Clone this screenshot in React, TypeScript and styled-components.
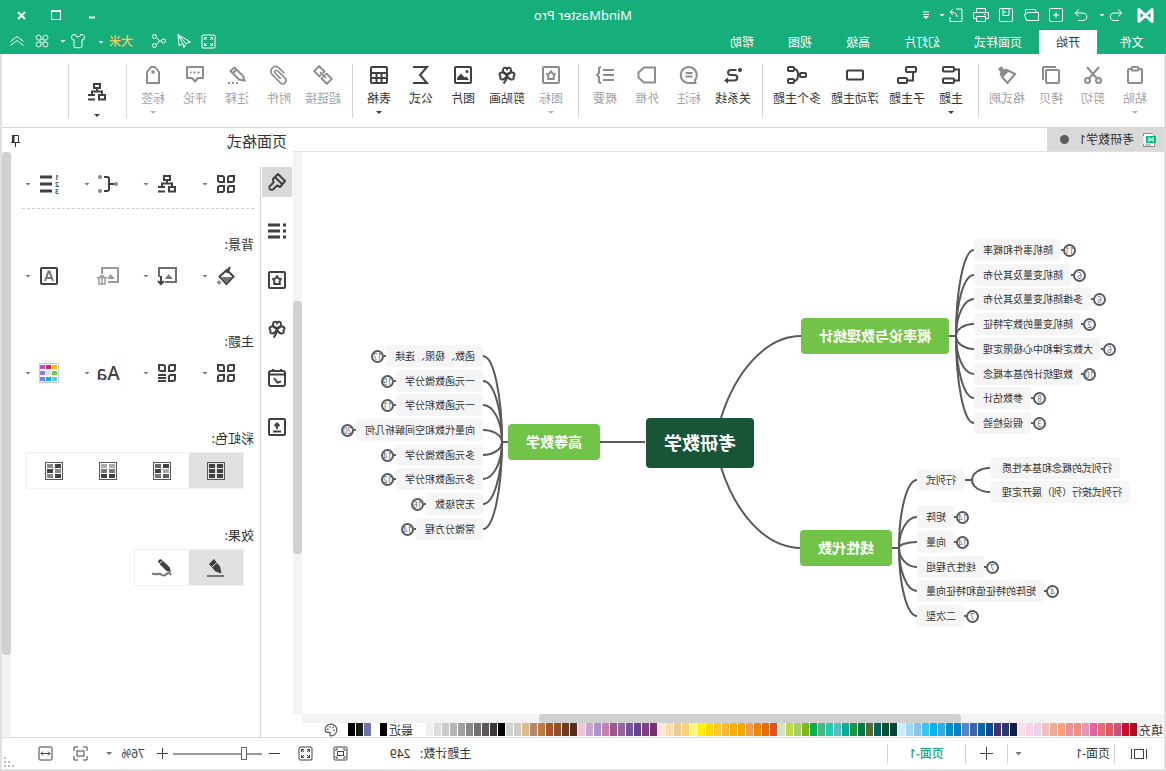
import React from "react";
import styled, { createGlobalStyle, css } from "styled-components";
import { Shirt, Palette } from "lucide-react";

const green = "#16ae7a";
const ink = "#404040";
const line = "#d4d4d4";

const GlobalStyle = createGlobalStyle`
  *, *::before, *::after { box-sizing: border-box; }
  body {
    margin: 0;
    background: #fff;
    color: #333;
    font: 12px/16px "Noto Sans", "Noto Sans CJK SC", sans-serif;
  }
  button, select, input { font: inherit; color: inherit; margin: 0; }
  button { border: 0; padding: 0; background: none; cursor: pointer; }
  svg { display: block; flex: none; overflow: visible; }
`;

/* The whole window is shown flipped left to right. */
const Window = styled.div`
  display: flex;
  flex-direction: column;
  min-height: 100vh;
  overflow: hidden;
  transform: scaleX(-1);
`;

/* ---------- shared pieces ---------- */

type IconProps = { w?: number; h?: number; sw?: number; children: React.ReactNode };

const Icon = ({ w = 18, h = w, sw = 2, children }: IconProps) => (
  <svg width={w} height={h} viewBox={`0 0 ${w} ${h}`} fill="none" stroke="currentColor" strokeWidth={sw} aria-hidden="true">
    {children}
  </svg>
);

const Caret = styled.span<{ $color?: string }>`
  flex: none;
  width: 6px;
  height: 3px;
  background: ${(p) => p.$color ?? "currentColor"};
  clip-path: polygon(0 0, 100% 0, 50% 100%);
`;

/* ---------- header ---------- */

const Header = styled.header`
  background: ${green};
  color: #fff;
`;

const TitleBar = styled.div`
  display: grid;
  grid-template-columns: 1fr auto 1fr;
  align-items: center;
  height: 30px;
  padding: 0 12px;
`;

const QuickBar = styled.div`
  display: flex;
  align-items: center;
  gap: 10px;
`;

const QuickButton = styled.button<{ $before?: number; $narrow?: boolean }>`
  display: flex;
  align-items: center;
  justify-content: center;
  gap: 4px;
  min-width: ${(p) => (p.$narrow ? 6 : 15)}px;
  height: 20px;
  margin-left: ${(p) => p.$before ?? 0}px;
`;

const AppTitle = styled.h1`
  margin: 0;
  font-size: 13px;
  font-weight: 400;
  line-height: 20px;
`;

const WindowButtons = styled.div`
  display: flex;
  justify-content: flex-end;
`;

const WindowButton = styled.button`
  display: flex;
  align-items: center;
  justify-content: center;
  width: 36px;
  height: 26px;
  &:last-child { width: 20px; margin-left: 6px; }
`;

const MenuBar = styled.nav`
  display: flex;
  height: 24px;
`;

const MenuTab = styled.button<{ $active?: boolean }>`
  padding: 2px 17px 0;
  &:first-child { width: 69px; }
  ${(p) => p.$active && css`background: #fff; color: #333;`}
`;

const MenuTools = styled.div`
  display: flex;
  align-items: center;
  gap: 10px;
  margin-left: auto;
  padding: 0 10px 2px 0;
`;

const UserButton = styled.button`
  display: flex;
  align-items: center;
  gap: 5px;
  margin-left: 8px;
  padding-top: 2px;
  color: #ffc65c;
  font-weight: 500;
`;

/* ---------- body and ribbon ---------- */

const Body = styled.div`
  flex: 1;
  display: flex;
  flex-direction: column;
  background: #fff;
  border: 2px solid #e0e0e0;
  border-top: 0;
`;

const Ribbon = styled.div`
  display: flex;
  height: 74px;
  padding: 10px 0 9px 2px;
  border-bottom: 1px solid ${line};
`;

const RibbonGroup = styled.div`
  display: flex;
  flex: none;
  padding: 0 5px 0 6px;
  border-right: 1px solid ${line};
`;

const RibbonButton = styled.button<{ $chars: number; $off?: boolean; $low?: boolean }>`
  display: flex;
  flex-direction: column;
  align-items: center;
  width: ${(p) => (p.$chars < 3 ? 42 : p.$chars * 12 + 10)}px;
  padding-top: ${(p) => (p.$low ? 19 : 2)}px;
  color: ${(p) => (p.$off ? "#8c8c8c" : ink)};
  white-space: nowrap;
`;

const RibbonLabel = styled.span<{ $off?: boolean }>`
  margin: 7px 0 4px;
  color: ${(p) => (p.$off ? "#a2a2a2" : "#333")};
`;

const RibbonSpacer = styled.span`
  height: 13px;
`;

type Tool = { label: string; icon: React.ReactNode; off?: boolean; menu?: boolean };

const clover = (
  <>
    <path d="M9 9C5 7 4.500 5 5 3.500C5.500 1.500 8 1 9 3C10 1 12.500 1.500 13 3.500C13.500 5 13 7 9 9Z" />
    <path d="M9 9C7 5.500 4.500 6.500 3.500 6.500C1.500 7 .500 9 2.500 10.500C1.500 12.500 3 14 5 13.500C7 13 8.500 11.500 9 9Z" />
    <path d="M9 9C11 5.500 13.500 6.500 14.500 6.500C16.500 7 17.500 9 15.500 10.500C16.500 12.500 15 14 13 13.500C11 13 9.500 11.500 9 9Z" />
    <path d="M9 9C9 13 10.500 15.500 12.500 17.500" />
  </>
);

const starBox = (
  <>
    <rect x="1" y="1" width="16" height="16" rx="1" />
    <path d="M9 5L10.500 7.500L13 8L11.500 10.500L12 13H6L6.500 10.500L5 8L7.500 7.500Z" strokeWidth="1.800" strokeLinejoin="round" />
  </>
);

const layoutIcon = (
  <Icon>
    <rect x="6" y="1" width="6" height="4" />
    <path d="M9 5V8M4 11V8.500H14V11" />
    <rect x="1" y="12" width="6" height="4.500" />
    <path d="M11 12H18M11 16.500H18" />
  </Icon>
);

const groups: Tool[][] = [
  [
    { label: "粘贴", off: true, menu: true, icon: <Icon><rect x="2" y="3" width="14" height="14" rx="1" /><rect x="5.500" y="1" width="7" height="3.500" rx="1.500" fill="#fff" /></Icon> },
    { label: "剪切", off: true, icon: <Icon><path d="M3 1L13 12.500M15 1L5 12.500" /><circle cx="3.500" cy="14.500" r="2.500" /><circle cx="14.500" cy="14.500" r="2.500" /></Icon> },
    { label: "拷贝", off: true, icon: <Icon><rect x="1" y="4" width="13" height="13" rx="1" /><path d="M4 1H16.500Q17 1 17 1.500V14" /></Icon> },
    { label: "格式刷", off: true, icon: <Icon><path d="M1 8L8 4.500L14 11L8.500 17Z" /><path d="M7 5L9.500 2.500L12 3.500L14.500 0L18 3L15.500 6L16.500 8.500L14 11.500Z" fill="currentColor" stroke="none" /></Icon> },
  ],
  [
    { label: "主题", menu: true, icon: <Icon><rect x="6" y="1" width="11" height="4.500" rx="1" /><rect x="6" y="12.500" width="11" height="4.500" rx="1" /><path d="M6 3.500H1V14.500H6" /></Icon> },
    { label: "子主题", icon: <Icon w={20} h={18}><rect x="1" y="1" width="10" height="5" rx="1" /><rect x="10" y="12" width="9" height="5" rx="1" /><path d="M4 6V14.500H10" /></Icon> },
    { label: "浮动主题", icon: <Icon><rect x="1" y="4.500" width="16" height="9" rx="1" /></Icon> },
    { label: "多个主题", icon: <Icon w={20} h={18}><rect x="1" y="7" width="6" height="4" rx="1" /><rect x="13" y="1" width="6" height="4" rx="1" /><rect x="13" y="13" width="6" height="4" rx="1" /><path d="M7 9H9M13 3C10 3 9 5 9 9C9 13 10 15 13 15" /></Icon> },
  ],
  [
    { label: "关系线", icon: <Icon><circle cx="2" cy="4" r="2" fill="currentColor" stroke="none" /><path d="M5.500 4H11C15 4 15 9 11 9H8C3.500 9 3.500 14.500 8 14.500H15" /><path d="M14 11.500L18 14.500L14 17.500Z" fill="currentColor" stroke="none" /></Icon> },
    { label: "标注", off: true, icon: <Icon><path d="M2.500 17H9A8 8 0 1 0 3 14Z" /><path d="M5.500 7H12.500M5.500 10.500H12.500" /></Icon> },
    { label: "外框", off: true, icon: <Icon><path d="M1 1.500H12L17.500 6.500V11.500L12 16.500H1Z" strokeLinejoin="round" /></Icon> },
    { label: "概要", off: true, icon: <Icon><path d="M0 4H11M0 9H11M0 14H11" /><path d="M13 1Q15 1 15 3V7L17 9L15 11V15Q15 17 13 17" /></Icon> },
  ],
  [
    { label: "图标", off: true, menu: true, icon: <Icon>{starBox}</Icon> },
    { label: "剪贴画", icon: <Icon>{clover}</Icon> },
    { label: "图片", icon: <Icon><rect x="1" y="1" width="16" height="16" rx="1" /><path d="M3 14L5.500 10.500L7.500 11.500L11 7.500L15 12V14Z" fill="currentColor" stroke="none" /><circle cx="5" cy="5.500" r="1.500" fill="currentColor" stroke="none" /></Icon> },
    { label: "公式", icon: <Icon><path d="M17 1H3L10 9L3 17H17" /></Icon> },
    { label: "表格", menu: true, icon: <Icon><rect x="1" y="1" width="16" height="16" rx="1" /><path d="M1 7H17M1 12H17M6.500 7V17M11.500 7V17" /></Icon> },
  ],
  [
    { label: "超链接", off: true, icon: <Icon><g transform="rotate(-45 9 9)"><path d="M7.500 10.500V12.500H0V5.500H7.500V7.500M10.500 7.500V5.500H18V12.500H10.500V10.500" strokeLinejoin="round" /><path d="M5 9H13" /></g></Icon> },
    { label: "附件", off: true, icon: <Icon><path d="M5 10.500H13A1.600 1.600 0 0 0 13 7H2.500A3 3 0 0 0 2.500 13.500H14.500A4.800 4.800 0 0 0 14.500 4H6.500" transform="rotate(-45 9 9)" strokeWidth="1.700" /></Icon> },
    { label: "注释", off: true, icon: <Icon><path d="M1.500 14.500L3 10L11.500 1.500L15.500 5L7 13.500Z" /><path d="M9.500 3.500L13.500 7.500" /><path d="M8 17H18" strokeDasharray="2 2" /></Icon> },
    { label: "评论", off: true, icon: <Icon><path d="M1 1H17V12H12L9 15.500L6 12H1Z" strokeLinejoin="round" /><path d="M4.500 6.500H14" strokeDasharray="2 2" /></Icon> },
    { label: "标签", off: true, menu: true, icon: <Icon><path d="M3 17V6L7 1H11L15 6V17Z" strokeLinejoin="round" /><circle cx="9" cy="6" r="1.800" fill="currentColor" stroke="none" /></Icon> },
  ],
];

/* ---------- editor ---------- */

const Workspace = styled.main`
  flex: 1;
  display: flex;
  min-height: 0;
`;

const Editor = styled.section`
  flex: 1;
  min-width: 0;
  display: flex;
  flex-direction: column;
`;

const DocTabs = styled.div`
  display: flex;
  height: 24px;
  border-bottom: 1px solid #e0e0e0;
`;

const DocTab = styled.button`
  display: flex;
  align-items: center;
  gap: 8px;
  width: 117px;
  padding-left: 8px;
  background: #d9d9d9;
`;

const Dot = styled.span`
  width: 9px;
  height: 9px;
  margin-left: 2px;
  border-radius: 50%;
  background: #5c5c5c;
`;

const CanvasRow = styled.div`
  flex: 1;
  display: flex;
  min-height: 0;
`;

const Canvas = styled.div`
  position: relative;
  flex: 1;
  min-width: 0;
  overflow: hidden;
`;

const Track = styled.div<{ $axis: "x" | "y"; $from: number; $size: number }>`
  display: flex;
  flex: none;
  flex-direction: ${(p) => (p.$axis === "x" ? "row" : "column")};
  background: #f3f3f3;
  ${(p) => (p.$axis === "x" ? css`height: 9px; margin-right: 9px;` : css`width: 9px;`)}
  &::before {
    content: "";
    flex: 0 0 ${(p) => p.$from}%;
  }
  &::after {
    content: "";
    flex: 0 0 ${(p) => p.$size}%;
    border-radius: 4px;
    background: #d0d0d0;
  }
`;

const Links = styled.svg`
  position: absolute;
  inset: 0;
`;

const TopicNode = styled.div<{ $x: number; $y: number; $root?: boolean }>`
  position: absolute;
  left: ${(p) => p.$x}px;
  top: ${(p) => p.$y}px;
  display: flex;
  align-items: center;
  height: ${(p) => (p.$root ? 50 : 36)}px;
  padding: 0 18px;
  border-radius: 4px;
  background: ${(p) => (p.$root ? "#175536" : "#71c447")};
  color: #fff;
  font-size: ${(p) => (p.$root ? 18 : 14)}px;
  font-weight: 700;
  white-space: nowrap;
`;

const LeafRow = styled.div<{ $x: number; $y: number; $side: "left" | "right" }>`
  position: absolute;
  top: ${(p) => p.$y - 11}px;
  display: flex;
  align-items: center;
  ${(p) =>
    p.$side === "left"
      ? css`left: 0; width: ${p.$x}px; flex-direction: row-reverse;`
      : css`left: ${p.$x}px;`}
`;

const Leaf = styled.span<{ $wide?: boolean }>`
  height: 22px;
  padding: 0 ${(p) => (p.$wide ? 12 : 9)}px 0 8px;
  border-radius: 4px;
  background: #f5f5f5;
  font-size: 10px;
  line-height: 22px;
  white-space: nowrap;
`;

const Stem = styled.span`
  width: 2px;
  height: 2px;
  background: #595959;
`;

const Badge = styled.span`
  width: 13px;
  height: 13px;
  border: 2px solid #595959;
  border-radius: 50%;
  color: #5c6684;
  display: flex;
  align-items: center;
  justify-content: center;
  font-size: 8px;
  line-height: 9px;
`;

type LeafData = [text: string, y: number, count?: number];

type Branch = {
  x: number;
  joint: [number, number];
  stem: number;
  side: "left" | "right";
  wide?: boolean;
  leaves: LeafData[];
};

const branches: Branch[] = [
  {
    x: 190, joint: [208, 184], stem: 215, side: "left",
    leaves: [
      ["随机事件和概率", 98, 11], ["随机变量及其分布", 123, 6], ["多维随机变量及其分布", 147, 6],
      ["随机变量的数字特征", 172, 2], ["大数定律和中心极限定理", 197, 6], ["数理统计的基本概念", 222, 10],
      ["参数估计", 246, 8], ["假设检验", 271, 3],
    ],
  },
  {
    x: 247, joint: [265, 396], stem: 272, side: "left",
    leaves: [
      ["行列式", 328], ["矩阵", 365, 14], ["向量", 390, 14],
      ["线性方程组", 415, 7], ["矩阵的特征值和特征向量", 439, 4], ["二次型", 464, 7],
    ],
  },
  {
    x: 174, joint: [192, 328], stem: 199, side: "left", wide: true,
    leaves: [["行列式的概念和基本性质", 316], ["行列式按行（列）展开定理", 340]],
  },
  {
    x: 681, joint: [662, 290], stem: 656, side: "right",
    leaves: [
      ["函数、极限、连续", 204, 17], ["一元函数微分学", 229, 19], ["一元函数积分学", 253, 11],
      ["向量代数和空间解析几何", 278, 20], ["多元函数微分学", 303, 14], ["多元函数积分学", 327, 12],
      ["无穷级数", 352, 16], ["常微分方程", 377, 14],
    ],
  },
];

/* Quarter-ellipse from a branch joint to the edge of a leaf. */
const curve = ([jx, jy]: [number, number], ex: number, ey: number) =>
  `M${jx} ${jy}C${jx} ${jy + (ey - jy) * 0.55} ${ex + (jx - ex) * 0.55} ${ey} ${ex} ${ey}`;

const MindMap = () => (
  <Canvas>
    <Links width="862" height="562" fill="none" stroke="#595959" strokeWidth="2" aria-hidden="true">
      <path d="M443 266C429 221 399 184 363 184M443 315C429 360 399 396 363 396M519 290H564" />
      {branches.map((b) => (
        <g key={b.x}>
          <path d={`M${b.stem} ${b.joint[1]}H${b.joint[0]}`} />
          {b.leaves.map(([t, y]) => <path key={t} d={curve(b.joint, b.x, y)} />)}
        </g>
      ))}
    </Links>
    <TopicNode $root $x={410} $y={266}>考研数学</TopicNode>
    <TopicNode $x={215} $y={166}>概率论与数理统计</TopicNode>
    <TopicNode $x={272} $y={378}>线性代数</TopicNode>
    <TopicNode $x={564} $y={272}>高等数学</TopicNode>
    {branches.flatMap((b) =>
      b.leaves.map(([text, y, count]) => (
        <LeafRow key={text} $x={b.x} $y={y} $side={b.side}>
          <Leaf $wide={b.wide}>{text}</Leaf>
          {count !== undefined && <><Stem /><Badge>{count}</Badge></>}
        </LeafRow>
      )),
    )}
  </Canvas>
);

const PaletteRow = styled.div`
  display: flex;
  align-items: flex-start;
  gap: 1px;
  height: 14px;
`;

const PaletteLabel = styled.span<{ $before?: number; $after: number }>`
  flex: none;
  margin-left: ${(p) => p.$before ?? 0}px;
  margin-right: ${(p) => p.$after}px;
  line-height: 16px;
`;

const Swatch = styled.button<{ $color: string }>`
  flex: none;
  width: 7px;
  height: 13px;
  background: ${(p) => p.$color};
`;

const PaletteButton = styled.button`
  margin-left: 9px;
  color: #555;
`;

const palette =
  "b80a18 d9082a c9517b ea5464 ef6a70 e95fa0 e197b5 f08e80 ee8f9a ffa07a f0a993 f6bfbd e9d3e7 fcd3e6 fde0e6 0c1f50 253a70 432e78 084a95 0067ab 3f62b0 5686c8 0080cf 0090d2 2fabe5 00b4f2 33c6fa 8bc2ea 9ed8f0 cfe9f6 024638 00552e 00645e 556b2f 007a48 1f9640 00b09f 55bec0 1fccb0 48b980 00b14f 7fba14 a4d168 c0da3f cce5cb e85020 f06a00 f28500 f59a55 f3a800 ffb000 feb735 fbc830 fed800 fff000 fdf385 ffd170 ebcb98 fddcab fce8d2 7a2f78 813c82 6a4097 74559b 97659f a0588c cb7cb0 aa93d0 c9a6cc edc4dc 5a2c1a 743a20 95502a a85528 bf7a40 b5866b dfb983 d3c9c6 ccd5cc 000000 3e3738 595757 727171 898989 9fa0a0 b5b5b6 c9caca dcdddd eeefef".split(" ");

const recent = ["6c74b5", "1a1a1a", "000000"];

/* ---------- format panel ---------- */

const Panel = styled.aside`
  flex: none;
  display: flex;
  flex-direction: column;
  width: 291px;
`;

const PanelHead = styled.div`
  display: flex;
  align-items: center;
  justify-content: space-between;
  height: 24px;
  padding: 1px 9px 0 6px;
`;

const PanelTitle = styled.h2`
  margin: 0;
  font-size: 15px;
  font-weight: 400;
  line-height: 22px;
`;

const PanelMain = styled.div`
  flex: 1;
  display: flex;
`;

const Strip = styled.div`
  flex: none;
  display: flex;
  flex-direction: column;
  gap: 19px;
  width: 33px;
  margin-top: 15px;
  padding-left: 1px;
  border-right: 1px solid ${line};
`;

const StripButton = styled.button<{ $active?: boolean }>`
  display: flex;
  align-items: center;
  justify-content: center;
  width: 30px;
  height: 30px;
  color: ${ink};
  background: ${(p) => (p.$active ? "#d9d9d9" : "none")};
`;

const PanelContent = styled.div`
  flex: 1;
  min-width: 0;
  padding: 23px 11px 0 6px;
  color: ${ink};
`;

const OptionRow = styled.div`
  display: grid;
  grid-template-columns: repeat(3, 59px) 1fr;
  height: 18px;
  padding-left: 19px;
`;

const OptionButton = styled.button<{ $muted?: boolean }>`
  display: flex;
  align-items: center;
  gap: 9px;
  height: 18px;
  color: ${(p) => (p.$muted ? "#9a9a9a" : ink)};
`;

const OptionIcon = styled.span`
  display: flex;
  justify-content: center;
  width: 18px;
`;

const Dashed = styled.hr`
  margin: 15px 0 25px;
  border: 0;
  border-top: 1px dashed #cfcfcf;
`;

const Section = styled.section`
  min-height: 97px;
`;

const SectionTitle = styled.h3<{ $tight?: boolean }>`
  margin: 0 0 ${(p) => (p.$tight ? 4 : 13)}px;
  color: #333;
  font-size: 13px;
  font-weight: 400;
  line-height: 20px;
`;

const Segments = styled.div`
  display: inline-flex;
  margin-left: 10px;
  border: 1px solid #f0f0f0;
  vertical-align: top;
`;

const Segment = styled.button<{ $active?: boolean }>`
  display: flex;
  align-items: center;
  justify-content: center;
  width: 54px;
  height: 35px;
  color: ${ink};
  background: ${(p) => (p.$active ? "#e0e0e0" : "#fff")};
`;

const FontSample = styled.span`
  font: 500 19px/18px "Noto Sans", sans-serif;
`;

const cells = (extra?: boolean) => (
  <Icon>
    <path d="M1 1H5Q7 1 7 3V7H3Q1 7 1 5ZM11 7V3Q11 1 13 1H17V5Q17 7 15 7ZM1 11H5Q7 11 7 13V17H3Q1 17 1 15Z" />
    {extra ? <path d="M10 11H18M10 14H18M10 17H18" strokeWidth="1.800" /> : <path d="M11 11H15Q17 11 17 13V17H13Q11 17 11 15Z" />}
  </Icon>
);

const rainbow = [
  ["#404040", "#404040", "#404040", "#404040", "#404040", "#404040"],
  ["#404040", "#666", "#aaa", "#404040", "#606060", "#777"],
  ["#aaa", "#aaa", "#777", "#777", "#404040", "#404040"],
  ["#404040", "#888", "#888", "#404040", "#404040", "#888"],
];

const themeColors = ["#f0c000", "#e0284f", "#c050d0", "#70cc40", "#dddddd", "#9078e8", "#60c8d8", "#00b8f0", "#7080ff"];

const bulletList = (
  <>
    <path d="M6 3H18M6 9H18M6 15H18" strokeWidth="3" />
    <path d="M0 3H3M0 9H3M0 15H3" strokeWidth="3" />
  </>
);

const strip = [
  { name: "页面格式", icon: <Icon><path d="M8 1L1 8L6 14L9 12.500L13 16.500Q17.500 17.500 16.500 13.500L12.500 9.500L13 6ZM11 4L4 11" strokeLinejoin="round" /></Icon> },
  { name: "大纲", icon: <Icon>{bulletList}</Icon> },
  { name: "图标", icon: <Icon>{starBox}</Icon> },
  { name: "剪贴画", icon: <Icon>{clover}</Icon> },
  { name: "任务", icon: <Icon><rect x="1" y="2" width="16" height="15" rx="2" /><path d="M1 5.500H17M5 0V3M13 0V3M5 12.500L8.500 13.500L12 9" /></Icon> },
  { name: "导出", icon: <Icon><rect x="1" y="1" width="16" height="16" rx="1" /><path d="M9 11V6M6.500 8L9 5.500L11.500 8M5 13.500H13" /></Icon> },
];

/* ---------- status bar ---------- */

const StatusBar = styled.footer`
  display: flex;
  align-items: center;
  height: 32px;
  border-top: 1px solid #dcdcdc;
`;

const StatusDivider = styled.span`
  width: 1px;
  height: 20px;
  background: ${line};
`;

const StatusButton = styled.button<{ $w: number; $on?: boolean }>`
  display: flex;
  align-items: center;
  justify-content: center;
  gap: 9px;
  width: ${(p) => p.$w}px;
  height: 30px;
  color: ${(p) => (p.$on ? "#19a577" : ink)};
  font-weight: ${(p) => (p.$on ? 500 : 400)};
`;

const PageSelect = styled.label`
  position: relative;
  display: flex;
  width: 106px;
`;

const PageSelectInput = styled.select`
  appearance: none;
  width: 100%;
  height: 24px;
  padding: 0 4px;
  border: 0;
  background: none;
`;

const SelectCaret = styled(Caret)`
  position: absolute;
  right: 7px;
  top: 10px;
  width: 7px;
  height: 4px;
  pointer-events: none;
`;

const TopicCount = styled.span`
  margin-left: auto;
  margin-right: 32px;
  white-space: pre;
`;

const ZoomSlider = styled.input`
  appearance: none;
  width: 89px;
  height: 14px;
  background: linear-gradient(#9a9a9a, #9a9a9a) center / 100% 2px no-repeat;
  &::-webkit-slider-thumb {
    appearance: none;
    width: 6px;
    height: 13px;
    border: 1px solid #666;
    background: #fff;
  }
`;

const Grip = styled.span`
  align-self: flex-end;
  margin: 0 2px 2px 14px;
  color: #bdbdbd;
`;

const fullscreen = (
  <Icon w={15} sw={1}>
    <rect x="1" y="1" width="13" height="13" rx="1" />
    <path d="M6 3.500H3.500V6M9 3.500H11.500V6M6 11.500H3.500V9M9 11.500H11.500V9M3.500 3.500L6 6M11.500 3.500L9 6M3.500 11.500L6 9M11.500 11.500L9 9" />
  </Icon>
);

export default function App() {
  return (
    <>
      <GlobalStyle />
      <Window>
        <Header>
          <TitleBar>
            <QuickBar>
              <Icon w={17} h={15} sw={3}>
                <path d="M2 13.500V1.500L8.500 7.500L15 1.500V13.500L8.500 7.500L2 13.500Z" strokeLinejoin="round" />
              </Icon>
              <QuickButton aria-label="撤销" $before={4}>
                <Icon w={14} sw={1}><path d="M5 1.500L1 5L5 8.500M1 5H9C14 5 14 12.500 9 12.500H4" /></Icon>
                <Caret />
              </QuickButton>
              <QuickButton aria-label="重做"><Icon w={14} sw={1}><path d="M9 1.500L13 5L9 8.500M13 5H5C0 5 0 12.500 5 12.500H10" /></Icon></QuickButton>
              <QuickButton aria-label="新建"><Icon w={14} sw={1}><rect x=".5" y=".5" width="13" height="13" rx="1" /><path d="M7 4V10M4 7H10" /></Icon></QuickButton>
              <QuickButton aria-label="打开"><Icon w={15} h={14} sw={1}><path d="M.5 12.500V4.500H11L14.500 6.500L12.500 12.500H.5M2.500 4.500L4 1.500H13.500V5.500" /></Icon></QuickButton>
              <QuickButton aria-label="保存"><Icon w={14} sw={1}><rect x=".5" y=".5" width="13" height="13" rx="1" /><path d="M4 .5V7.500H10V.5M8 3V5" /></Icon></QuickButton>
              <QuickButton aria-label="打印"><Icon w={16} h={14} sw={1}><path d="M3.500 4V.5H12.500V4M3.500 10.500H.5V4.500H15.500V10.500H12.500" /><rect x="3.500" y="8.500" width="9" height="5" /><path d="M3 6.500H5" /></Icon></QuickButton>
              <QuickButton aria-label="导出">
                <Icon w={14} sw={1}><path d="M7 1H1V13.500H13V9M6 9C6 6 8 4 13 4M10 1L13 4L10 7" /></Icon>
                <Caret />
              </QuickButton>
              <QuickButton aria-label="自定义工具栏" $narrow>
                <Icon w={6} h={8} sw={1}><path d="M0 1H6M0 3.500H6" /><path d="M0 5H6L3 8Z" fill="currentColor" stroke="none" /></Icon>
              </QuickButton>
            </QuickBar>
            <AppTitle>MindMaster Pro</AppTitle>
            <WindowButtons>
              <WindowButton aria-label="最小化"><Icon w={8}><path d="M1 6.500H7" /></Icon></WindowButton>
              <WindowButton aria-label="最大化"><Icon w={10} sw={1}><rect x=".5" y=".5" width="9" height="9" /><path d="M0 1H10" strokeWidth="2" /></Icon></WindowButton>
              <WindowButton aria-label="关闭"><Icon w={9} sw={2}><path d="M1 1L8 8M8 1L1 8" /></Icon></WindowButton>
            </WindowButtons>
          </TitleBar>
          <MenuBar>
            {["文件", "开始", "页面样式", "幻灯片", "高级", "视图", "帮助"].map((t) => (
              <MenuTab key={t} $active={t === "开始"}>{t}</MenuTab>
            ))}
            <MenuTools>
              <QuickButton aria-label="全屏">{fullscreen}</QuickButton>
              <QuickButton aria-label="发送"><Icon w={14} sw={1}><path d="M13 .5L.5 8L5 9.500L7 13.500L8 10L12 11.500ZM13 .5L5 9.500M13 .5L8 10" /></Icon></QuickButton>
              <QuickButton aria-label="分享"><Icon w={14} sw={1}><circle cx="2.500" cy="7" r="2" /><circle cx="11.500" cy="2.500" r="2" /><circle cx="11.500" cy="11.500" r="2" /><path d="M4.500 7H6.500L9.500 3.500M6.500 7L9.500 10.500" /></Icon></QuickButton>
              <UserButton>大米<Caret $color="#fff" /></UserButton>
              <QuickButton aria-label="主题皮肤" $before={2}><Shirt size={16} strokeWidth={1.5} /><Caret /></QuickButton>
              <QuickButton aria-label="应用"><Icon w={14} sw={1}><path d="M6 6H3A2.500 2.500 0 1 1 6 3ZM8 6H11A2.500 2.500 0 1 0 8 3ZM6 8H3A2.500 2.500 0 1 0 6 11ZM8 8H11A2.500 2.500 0 1 1 8 11Z" /></Icon></QuickButton>
              <QuickButton aria-label="收起功能区"><Icon w={14} sw={1}><path d="M.5 7.500L7 2.500L13.500 7.500M.5 11.500L7 6.500L13.500 11.500" /></Icon></QuickButton>
            </MenuTools>
          </MenuBar>
        </Header>

        <Body>
          <Ribbon>
            {groups.map((tools, i) => (
              <RibbonGroup key={i}>
                {tools.map((t) => (
                  <RibbonButton key={t.label} $chars={t.label.length} $off={t.off}>
                    {t.icon}
                    <RibbonLabel $off={t.off}>{t.label}</RibbonLabel>
                    {t.menu && <Caret $color={t.off ? "#b5b5b5" : ink} />}
                  </RibbonButton>
                ))}
              </RibbonGroup>
            ))}
            <RibbonGroup>
              <RibbonButton $chars={3} $low aria-label="布局">
                {layoutIcon}
                <RibbonSpacer />
                <Caret />
              </RibbonButton>
            </RibbonGroup>
          </Ribbon>

          <Workspace>
            <Editor>
              <DocTabs>
                <DocTab>
                  <Icon w={14} sw={1}>
                    <path d="M12.500 3V.5H4L1.500 3V13.500H12.500V11" stroke="#888" fill="#fff" />
                    <path d="M3 5H4M3 7.500H4M3 10H4M5 12H11" stroke="#888" />
                    <rect x="0" y="3" width="10" height="7" fill="#08b983" stroke="none" />
                    <path d="M3 8.500V4.500L7 8.500V4.500L3 8.500" stroke="#fff" />
                  </Icon>
                  考研数学1
                  <Dot />
                </DocTab>
              </DocTabs>
              <CanvasRow>
                <MindMap />
                <Track $axis="y" $from={26.5} $size={45} />
              </CanvasRow>
              <Track $axis="x" $from={23.5} $size={49} />
              <PaletteRow>
                <PaletteLabel $before={1} $after={1}>填充</PaletteLabel>
                {palette.map((c, i) => <Swatch key={i} $color={`#${c}`} aria-label={`#${c}`} />)}
                <PaletteLabel $before={12} $after={1}>最近</PaletteLabel>
                <Swatch $color="#000" aria-label="当前颜色" />
                <PaletteLabel $after={7} />
                {recent.map((c) => <Swatch key={c} $color={`#${c}`} aria-label={`#${c}`} />)}
                <PaletteButton aria-label="更多颜色"><Palette size={14} /></PaletteButton>
              </PaletteRow>
            </Editor>

            <Panel>
              <PanelHead>
                <PanelTitle>页面格式</PanelTitle>
                <button aria-label="固定面板">
                  <Icon w={9} h={12} sw={1}><path d="M1.500 7.500V.5H7.500V7.500M0 7.500H9M4.500 7.500V12" /><path d="M6.500 0V7" strokeWidth="2" /></Icon>
                </button>
              </PanelHead>
              <PanelMain>
                <Strip>
                  {strip.map((s, i) => <StripButton key={s.name} $active={i === 0} aria-label={s.name}>{s.icon}</StripButton>)}
                </Strip>
                <PanelContent>
                  <OptionRow>
                    <OptionButton aria-label="样式">{cells()}<Caret $color="#777" /></OptionButton>
                    <OptionButton aria-label="布局">{layoutIcon}<Caret $color="#777" /></OptionButton>
                    <OptionButton aria-label="连接线">
                      <OptionIcon>
                        <Icon w={20} h={18}><path d="M3 9H9M14 2H11Q9 2 9 4V14Q9 16 11 16H14" /><g fill="#888" stroke="none"><circle cx="2" cy="9" r="2" /><circle cx="18" cy="2" r="2" /><circle cx="18" cy="16" r="2" /></g></Icon>
                      </OptionIcon>
                      <Caret $color="#777" />
                    </OptionButton>
                    <OptionButton aria-label="编号">
                      <OptionIcon>
                        <Icon w={18} h={20}>
                          <path d="M6 3H18M6 10H18M6 17H18" strokeWidth="3" />
                          <g fill="currentColor" stroke="none" fontSize="7" fontWeight="600"><text x="-1" y="6">1</text><text x="-1" y="13">2</text><text x="-1" y="20">3</text></g>
                        </Icon>
                      </OptionIcon>
                      <Caret $color="#777" />
                    </OptionButton>
                  </OptionRow>
                  <Dashed />
                  <Section>
                    <SectionTitle>背景:</SectionTitle>
                    <OptionRow>
                      <OptionButton aria-label="背景颜色">
                        <Icon><path d="M7 2L15.500 9.500L8.500 17L1.500 9.500L8 3M8 6L5 0" /><path d="M3 10H15L8.500 16Z" fill="#777" stroke="none" /><circle cx="16" cy="15.500" r="2" fill="#888" stroke="none" /></Icon>
                        <Caret $color="#777" />
                      </OptionButton>
                      <OptionButton aria-label="插入背景图">
                        <OptionIcon>
                          <Icon w={20} h={18}><path d="M12 15H1V1H18V10" stroke="#6e6e6e" /><path d="M4 12L8.500 7L12 12Z" fill="#777" stroke="none" /><path d="M16 9V17M13 14L16 17L19 14" /></Icon>
                        </OptionIcon>
                        <Caret $color="#777" />
                      </OptionButton>
                      <OptionButton aria-label="删除背景图" $muted>
                        <OptionIcon>
                          <Icon w={22} h={18}><path d="M11 15H1V1H17V7" /><path d="M4 12L8.500 7L12 12Z" fill="currentColor" stroke="none" /><path d="M12 10.500H22M15 9H19" strokeWidth="1.500" /><path d="M14 11V17H20V11M17 11V17" strokeWidth="1.500" /></Icon>
                        </OptionIcon>
                      </OptionButton>
                      <OptionButton aria-label="水印">
                        <Icon><rect x="1" y="1" width="16" height="16" rx="1" /><path d="M5 14L8.500 4.500H9.500L13 14M6.500 11H11.500" stroke="#777" /></Icon>
                        <Caret $color="#777" />
                      </OptionButton>
                    </OptionRow>
                  </Section>
                  <Section>
                    <SectionTitle>主题:</SectionTitle>
                    <OptionRow>
                      <OptionButton aria-label="主题">{cells()}<Caret $color="#777" /></OptionButton>
                      <OptionButton aria-label="主题样式">{cells(true)}<Caret $color="#777" /></OptionButton>
                      <OptionButton aria-label="主题字体"><OptionIcon><FontSample>Aa</FontSample></OptionIcon><Caret $color="#777" /></OptionButton>
                      <OptionButton aria-label="主题颜色">
                        <OptionIcon>
                          <Icon w={20} sw={1}>
                            <rect x=".5" y=".5" width="19" height="19" stroke="#c6cadb" />
                            {themeColors.map((c, i) => <rect key={c} x={2 + (i % 3) * 6} y={2 + Math.floor(i / 3) * 6} width="5" height="4" fill={c} stroke="none" />)}
                          </Icon>
                        </OptionIcon>
                        <Caret $color="#777" />
                      </OptionButton>
                    </OptionRow>
                  </Section>
                  <Section>
                    <SectionTitle $tight>彩虹色:</SectionTitle>
                    <Segments>
                      {rainbow.map((set, n) => (
                        <Segment key={n} $active={n === 0} aria-label={`彩虹色 ${n + 1}`}>
                          <Icon sw={1}>
                            <rect x=".5" y=".5" width="17" height="17" stroke="#555" />
                            {set.map((c, i) => <rect key={i} x={i % 2 ? 10 : 2} y={2 + Math.floor(i / 2) * 5} width="6" height="4" fill={c} stroke="none" />)}
                          </Icon>
                        </Segment>
                      ))}
                    </Segments>
                  </Section>
                  <Section>
                    <SectionTitle $tight>效果:</SectionTitle>
                    <Segments>
                      <Segment $active aria-label="标准">
                        <Icon><path d="M11 0L16 5L9.500 12.500L3.500 14.500L5 7.500Z" fill="currentColor" stroke="none" /><path d="M8 3.500L13 8" stroke="#e0e0e0" strokeWidth="1" /><path d="M1 17H18" stroke="#777" /></Icon>
                      </Segment>
                      <Segment aria-label="手绘">
                        <Icon w={20} h={18}><path d="M1 13L2.500 8L10 1Q12-.5 13.500 1.500Q14.500 3 13 4.500L5.500 12Z" fill="currentColor" stroke="none" /><path d="M9.500 2L13 5" stroke="#fff" strokeWidth="1" /><path d="M1 16Q3 12.500 5.500 15T10 16T14 15T20 14.500" stroke="#777" /></Icon>
                      </Segment>
                    </Segments>
                  </Section>
                </PanelContent>
                <Track $axis="y" $from={0} $size={86} />
              </PanelMain>
            </Panel>
          </Workspace>

          <StatusBar>
            <StatusButton $w={49} aria-label="页面视图"><Icon w={16} h={12} sw={1}><rect x="3.500" y="1.500" width="9" height="9" /><path d="M.5 1V11M15.500 1V11" /></Icon></StatusButton>
            <StatusDivider />
            <PageSelect>
              <PageSelectInput aria-label="页面"><option>页面-1</option></PageSelectInput>
              <SelectCaret $color="#777" />
            </PageSelect>
            <StatusDivider />
            <StatusButton $w={41} aria-label="新建页面"><Icon w={13} sw={1}><path d="M6.500 0V13M0 6.500H13" /></Icon></StatusButton>
            <StatusDivider />
            <StatusButton $w={77} $on>页面-1</StatusButton>
            <StatusDivider />
            <TopicCount>主题计数:   249</TopicCount>
            <StatusButton $w={35} aria-label="适应主题"><Icon w={15} sw={1}><rect x="1" y="1" width="13" height="13" rx="1" /><rect x="4.500" y="5.500" width="6" height="4" /><path d="M3 5V3H5M10 3H12V5M3 10V12H5M10 12H12V10" /></Icon></StatusButton>
            <StatusButton $w={35} aria-label="全屏">{fullscreen}</StatusButton>
            <StatusButton $w={26} aria-label="缩小"><Icon w={11} sw={1}><path d="M0 5.500H11" /></Icon></StatusButton>
            <ZoomSlider type="range" min={0} max={100} defaultValue={18} aria-label="缩放" />
            <StatusButton $w={20} aria-label="放大"><Icon w={11} sw={1}><path d="M5.500 0V11M0 5.500H11" /></Icon></StatusButton>
            <StatusButton $w={55}>76%<Caret $color="#777" /></StatusButton>
            <StatusButton $w={35} aria-label="适应页面"><Icon w={15} sw={1}><rect x="4" y="5" width="7" height="5" /><path d="M1 5V1H5M10 1H14V5M1 10V14H5M10 14H14V10" /></Icon></StatusButton>
            <StatusButton $w={35} aria-label="适应宽度"><Icon w={15} sw={1}><rect x="1" y="1" width="13" height="13" rx="1" /><path d="M3 7.500H12M5 5.500L3 7.500L5 9.500M10 5.500L12 7.500L10 9.500" /></Icon></StatusButton>
            <Grip><Icon w={10} sw={2}><path d="M8 1H10M4 5H6M8 5H10M0 9H2M4 9H6M8 9H10" /></Icon></Grip>
          </StatusBar>
        </Body>
      </Window>
    </>
  );
}
